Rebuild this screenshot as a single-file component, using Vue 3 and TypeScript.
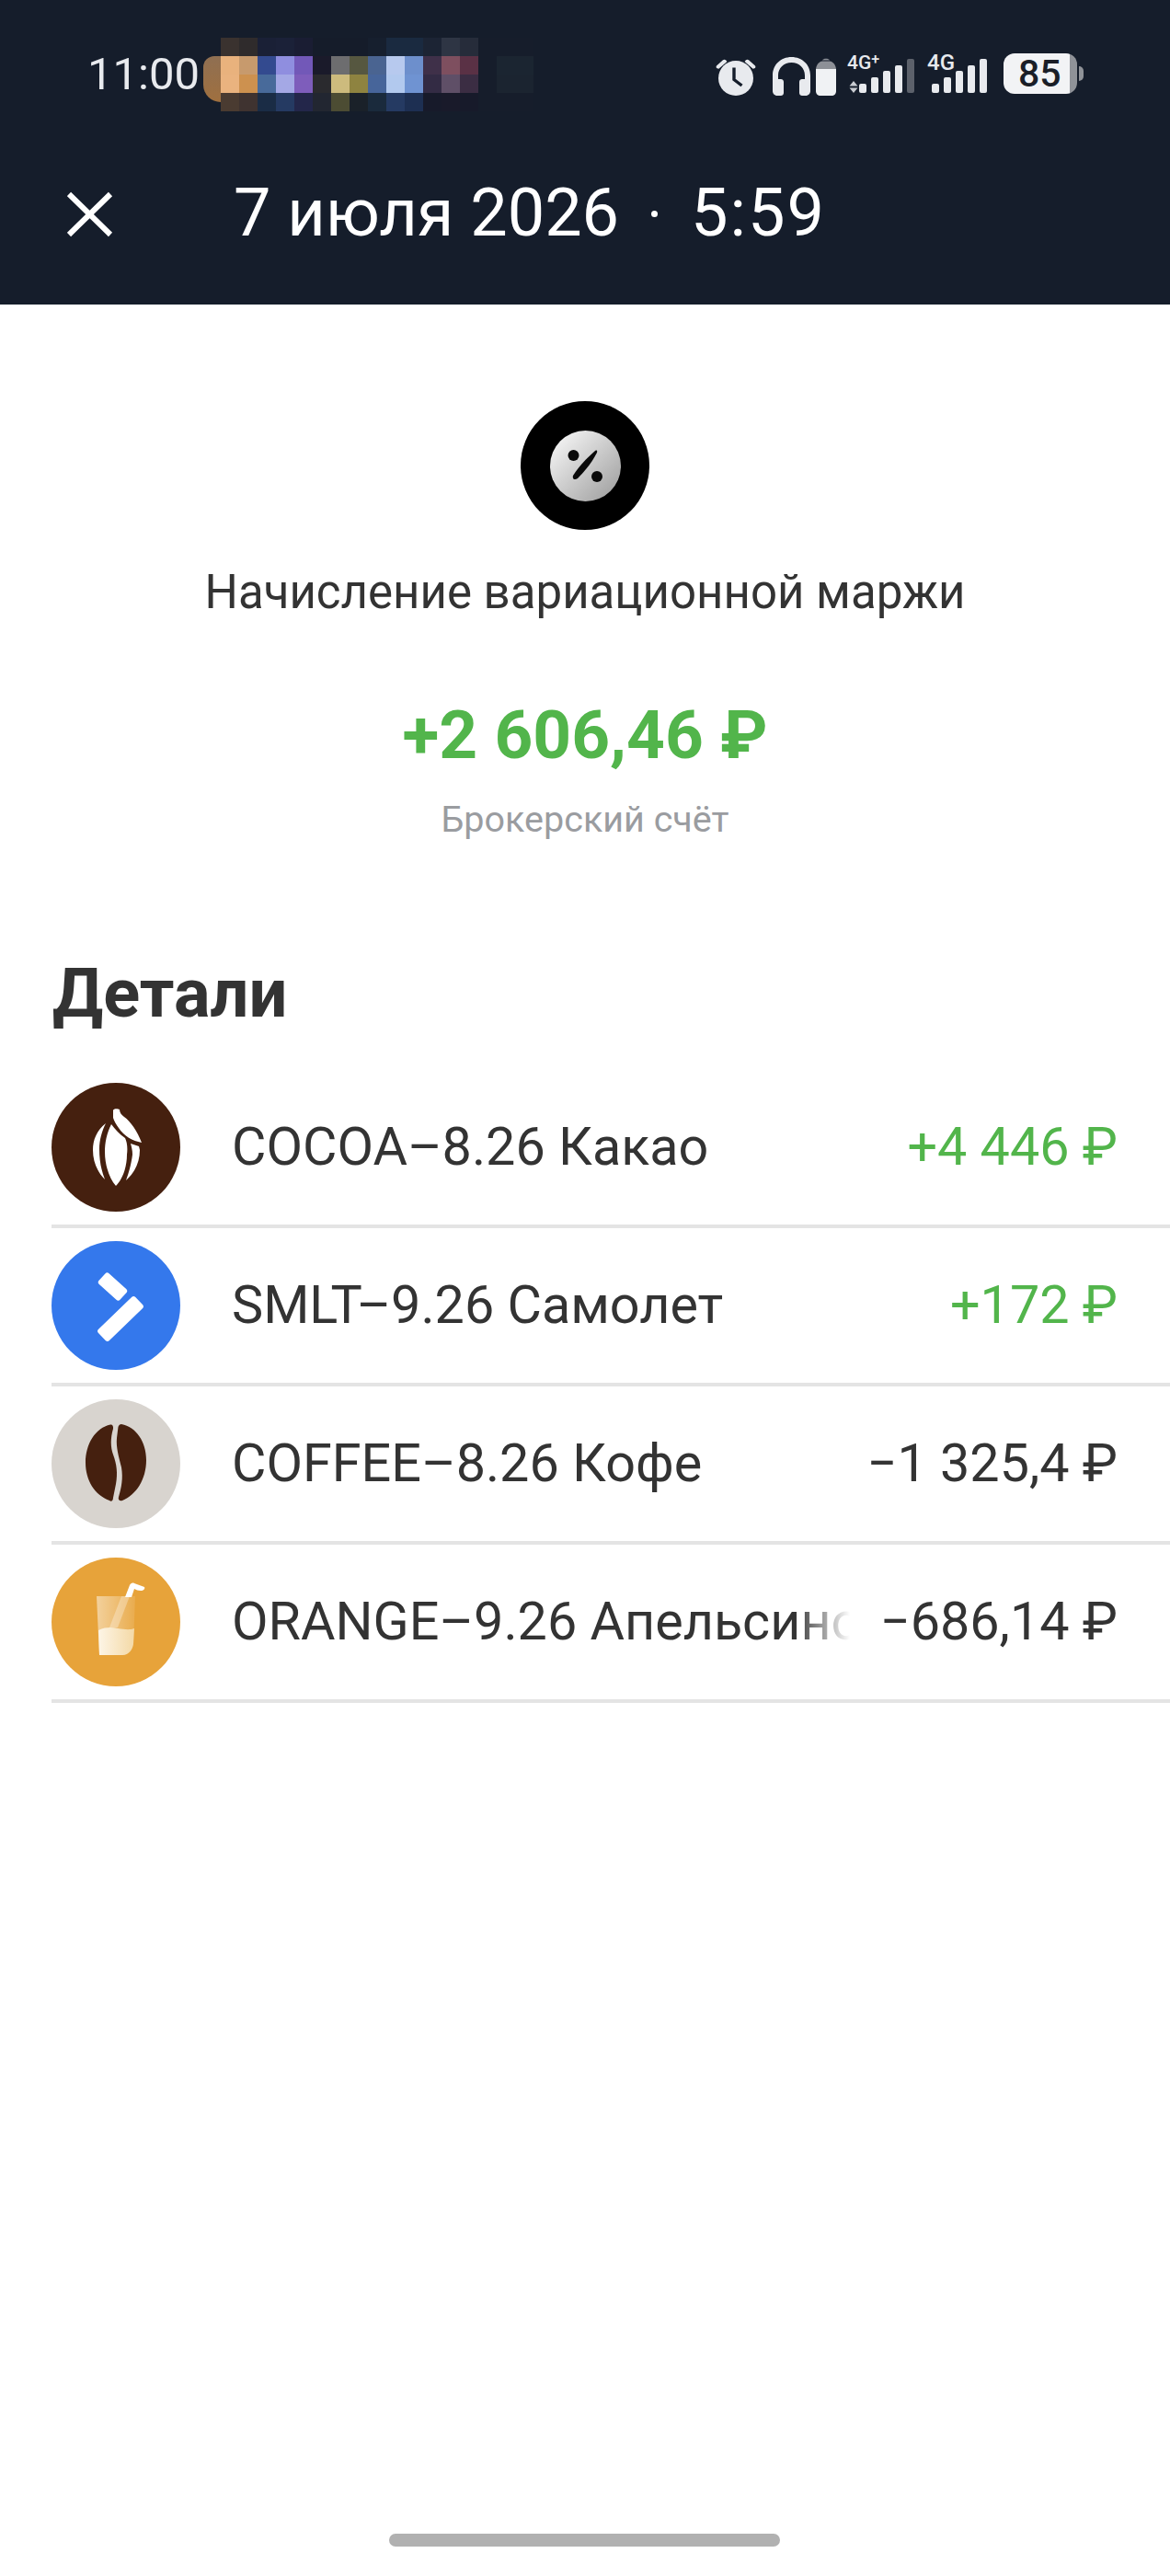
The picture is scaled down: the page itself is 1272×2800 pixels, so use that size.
<template>
  <div class="page">
    <header class="top">
      <div class="status">
        <span class="clock">11:00</span>
        <div class="mosaic">
          <i
            v-for="(c, i) in mosaic"
            :key="i"
            :style="{ background: c }"
          />
        </div>
        <div class="status-icons">
          <!-- будильник -->
          <svg class="ic" width="44" height="42" viewBox="0 0 44 42">
            <path d="M1 9.500 8 3.200c1-.9 2.600-.7 3.300.4L12.400 5 3.400 12.800 1.600 12.200C.5 11.800.3 10.300 1 9.500zM43 9.500 36 3.200c-1-.9-2.600-.7-3.300.4L31.600 5l9 7.800 1.800-.6c1.100-.4 1.300-1.900.6-2.700z" fill="#e8eaee" />
            <circle cx="22" cy="23" r="19" fill="#e8eaee" />
            <path d="M20 11.500V24.500L28.500 31" fill="none" stroke="#151d2b" stroke-width="3.400" />
          </svg>
          <!-- наушники -->
          <svg class="ic ic-hp" width="41" height="42" viewBox="0 0 41 42">
            <path d="M0 25V20C0 8.500 8.800 0 20.500 0S41 8.500 41 20v5h-6v-5C35 12 28.800 6 20.500 6S6 12 6 20v5z" fill="#e8eaee" />
            <path d="M0 24h9c1.500 0 3 1 3 3v12c0 2-1.500 3-3 3H5c-3 0-5-2.500-5-5zM41 24h-9c-1.500 0-3 1-3 3v12c0 2 1.500 3 3 3h4c3 0 5-2.500 5-5z" fill="#e8eaee" />
          </svg>
          <svg class="ic ic-bud" width="22" height="42" viewBox="0 0 22 42">
            <path d="M7 3.500C8 1 14 1 15 3.500z" fill="#8d9097" />
            <path d="M0 14c0-5 3-9 7-9.500h8c4 .5 7 4.500 7 9.500z" fill="#8d9097" />
            <path d="M0 13h22v24c0 3-2 5-5 5H5c-3 0-5-2-5-5z" fill="#f0f2f4" />
          </svg>
          <!-- сигнал 4G+ -->
          <div class="sim sim-a">
            <span class="net">4G<sup>+</sup></span>
            <svg class="arrows" width="10" height="13" viewBox="0 0 10 13">
              <path d="M5 0 9.500 5.500H.5zM5 13 .5 7.500h9z" fill="#c8cbd1" />
            </svg>
            <div class="bars">
              <b v-for="h in [10, 17, 24, 30, 37]" :key="h" :class="{ off: h === 37 }" :style="{ height: h + 'px' }" />
            </div>
          </div>
          <div class="sim sim-b">
            <span class="net">4G</span>
            <div class="bars">
              <b v-for="h in [10, 17, 24, 30, 37]" :key="h" :style="{ height: h + 'px' }" />
            </div>
          </div>
          <div class="batt">
            <div class="batt-body"><span>85</span></div>
            <i class="batt-cap" />
          </div>
        </div>
      </div>
      <div class="nav">
        <svg class="close" width="50" height="50" viewBox="0 0 50 50">
          <path d="M2 3 47 47M47 3 2 47" fill="none" stroke="#fff" stroke-width="6" />
        </svg>
        <div class="title">
          <span class="title-date">7 июля 2026</span>
          <i class="title-dot" />
          <span class="title-time">5:59</span>
        </div>
      </div>
    </header>

    <section class="summary">
      <div class="badge">
        <svg width="77" height="77" viewBox="0 0 77 77">
          <defs>
            <linearGradient id="coin" x1="0.1" y1="0.1" x2="0.9" y2="0.9">
              <stop offset="0" stop-color="#f3f3f3" />
              <stop offset="1" stop-color="#a4a4a4" />
            </linearGradient>
          </defs>
          <circle cx="38.500" cy="38.500" r="38.500" fill="url(#coin)" />
          <circle cx="25.500" cy="27" r="6" fill="#0a0a0a" />
          <circle cx="51" cy="50" r="6" fill="#0a0a0a" />
          <path d="M49 22C51 21 51.500 22 51 24 46 34 38 44 30 52 27 54 24 53 25 49 31 39 40 30 49 22z" fill="#0a0a0a" />
        </svg>
      </div>
      <div class="op-name">Начисление вариационной маржи</div>
      <div class="op-sum">+2 606,46 ₽</div>
      <div class="op-acc">Брокерский счёт</div>
    </section>

    <h2 class="details">Детали</h2>
    <ul class="rows">
      <li v-for="row in rows" :key="row.name" class="row">
        <div class="logo" :style="{ background: row.bg }">
          <svg v-if="row.icon === 'cocoa'" width="140" height="140" viewBox="0 0 140 140">
            <path d="M59 44C49 52 45 62 45 73 45 86 50 97 58 105 54 95 52 84 52 72 52 62 55 52 59 44z" fill="#fff" />
            <path d="M65 45C60 55 58 65 58 75 58 90 63 104 70 112 77 105 82 92 82 78 83 70 82 64 80 60 74 56 69 50 65 45z" fill="#fff" />
            <path d="M67 30C67 28 72 28 74 29 74 32 76 35 79 37 86 42 93 52 98 65 88 63 79 58 73 49 70 45 68 41 67 38z" fill="#fff" />
            <path d="M86 66C89 67 92 68 95 69L96 73C96 87 90 98 81 106 85 95 87 86 88 78 88 73 87 70 86 66z" fill="#fff" />
          </svg>
          <svg v-else-if="row.icon === 'smlt'" width="140" height="140" viewBox="0 0 140 140">
            <rect x="-15.500" y="-8" width="31" height="16" rx="3" transform="translate(66.500 49.500) rotate(42)" fill="#fff" />
            <rect x="-28" y="-8.500" width="56" height="17" rx="3" transform="translate(75 84.500) rotate(-44)" fill="#fff" />
          </svg>
          <svg v-else-if="row.icon === 'coffee'" width="140" height="140" viewBox="0 0 140 140">
            <path d="M64 27.500C66 27 67.500 29 67 32 64 42 64 52 67 60 71 71 72 80 70 92L67 107C67 110 65 112 63 110 47 104 37 88 37 69 37 48 48 31 64 27.500z" fill="#45200f" />
            <path d="M76 27C92 30 103 46 103 66 103 87 92 104 77 110 74 111 72 109 73 106 76 96 78 86 76 74 73 62 70 52 71 42L72.500 30C73 28 74.500 27 76 27z" fill="#45200f" />
          </svg>
          <svg v-else width="140" height="140" viewBox="0 0 140 140">
            <defs>
              <linearGradient id="glass" x1="0" x2="1" y1="0" y2="0">
                <stop offset="0" stop-color="#fff" stop-opacity=".5" />
                <stop offset="1" stop-color="#fff" stop-opacity=".1" />
              </linearGradient>
              <linearGradient id="juice" x1="0" x2="1" y1="0" y2="0">
                <stop offset="0" stop-color="#fdf5e6" />
                <stop offset="1" stop-color="#f4d9a6" />
              </linearGradient>
            </defs>
            <path d="M49 42H91L89 94C88 100 84 106 77 106H52z" fill="url(#glass)" />
            <path d="M51 79C60 75 66 76 72 77 79 78 85 79 90 77L89 94C88 100 84 106 77 106H52z" fill="url(#juice)" />
            <path d="M63 76 76 42 85 42 72 76z" fill="#fff" opacity=".3" />
            <path d="M80 43 85 30C86 28 88 27 90 28L101 32C102 34 100 36 97 36 94 36 92 35 90 34L87 43z" fill="#fff" />
          </svg>
        </div>
        <div class="row-body">
          <span class="row-name">{{ row.name }}</span>
          <span class="row-sum" :class="{ plus: row.sum.startsWith('+') }">{{ row.sum }}</span>
        </div>
      </li>
    </ul>
    <div class="home-bar" />
  </div>
</template>

<script setup lang="ts">
interface Row {
  icon: string
  bg: string
  name: string
  sum: string
}

const rows: Row[] = [
  { icon: 'cocoa', bg: '#45200f', name: 'COCOA–8.26 Какао', sum: '+4 446 ₽' },
  { icon: 'smlt', bg: '#3478ec', name: 'SMLT–9.26 Самолет', sum: '+172 ₽' },
  { icon: 'coffee', bg: '#d8d4cf', name: 'COFFEE–8.26 Кофе', sum: '−1 325,4 ₽' },
  { icon: 'orange', bg: '#e7a33a', name: 'ORANGE–9.26 Апельсиновый сок', sum: '−686,14 ₽' },
]

// размытая полоса уведомлений, 17 колонок на 4 ряда
const mosaic: string[] = [
  '#3a322f', '#2f2b2c', '#1a2036', '#1b2138', '#1a1d33', '#151c2a', '#151c2a', '#151c2a', '#161f2e', '#1a2a40', '#1a2a40', '#1c2434', '#2e3544', '#262c3a', '#161d2b', '#161d2b', '#161d2b',
  '#e9b27d', '#c79a6d', '#334a8f', '#8f8edf', '#7258b8', '#1a1a2a', '#6d6d6f', '#565740', '#4a6491', '#b7c9ee', '#6d8fcc', '#3f3049', '#7e4f5f', '#5a3145', '#161d2b', '#1b2531', '#1b2531',
  '#eab37f', '#cd914f', '#486a9a', '#a4a8e5', '#7e5dbb', '#2a2a2e', '#cdbb7d', '#8e8340', '#47659a', '#b2c9ee', '#6f93d2', '#332b44', '#5f4f67', '#3b2d43', '#161d2b', '#1b2430', '#1b2430',
  '#4a3b31', '#3f3330', '#1a2c45', '#253a62', '#23264a', '#222631', '#4c4c33', '#1a2129', '#1a2a3c', '#253a62', '#1d2f52', '#171a2a', '#191a2a', '#171a2a', '#161d2b', '#161d2b', '#161d2b',
]
</script>

<style scoped>
.page {
  position: relative;
  height: 2800px;
  font-family: Roboto, "Noto Sans", sans-serif;
  color: #333;
  overflow: hidden;
}

.top {
  height: 331px;
  background: #151d2b;
  box-sizing: border-box;
}

.status {
  display: flex;
  align-items: center;
  height: 40px;
  padding: 61px 0 0 95px;
}

.clock {
  font-size: 49px;
  line-height: 42px;
  color: #e8eaee;
  width: 145px;
  flex: none;
}

.mosaic {
  position: relative;
  display: grid;
  grid-template-columns: repeat(17, 20px);
  grid-auto-rows: 20px;
  flex: none;
}

/* край аватарки слева от мозаики */
.mosaic::before {
  content: "";
  position: absolute;
  left: -19px;
  top: 20px;
  width: 19px;
  height: 50px;
  border-radius: 14px 0 0 22px;
  background: linear-gradient(180deg, #8f6f52, #a0703f);
}

.mosaic i {
  display: block;
}

.status-icons {
  display: flex;
  align-items: flex-end;
  position: absolute;
  top: 60px;
  left: 778px;
  height: 44px;
}

.ic {
  flex: none;
  display: block;
}

.ic-hp {
  margin-left: 18px;
}

.ic-bud {
  margin-left: 6px;
}

.sim {
  position: relative;
  height: 44px;
  flex: none;
}

.sim-a {
  width: 73px;
  margin-left: 12px;
}

.sim-b {
  width: 65px;
  margin-left: 14px;
}

.net {
  position: absolute;
  left: 0;
  top: -3px;
  font-size: 21px;
  line-height: 22px;
  font-weight: 500;
  color: #e8eaee;
}

.net sup {
  font-size: 16px;
  line-height: 0;
  vertical-align: 5px;
}

.sim-b .net {
  font-size: 24px;
}

.arrows {
  position: absolute;
  left: 2px;
  bottom: 3px;
}

.bars {
  position: absolute;
  right: 0;
  bottom: 3px;
  display: flex;
  align-items: flex-end;
  gap: 5px;
}

.bars b {
  display: block;
  width: 8px;
  border-radius: 2px;
  background: #e8eaee;
}

.bars b.off {
  background: #5c616b;
}

.batt {
  display: flex;
  align-items: center;
  margin-left: 18px;
  margin-bottom: 2px;
  flex: none;
}

.batt-body {
  width: 80px;
  height: 44px;
  border-radius: 12px;
  background: linear-gradient(90deg, #f2f3f5 0 90%, #8f9298 90%);
  display: flex;
  align-items: center;
  padding-left: 16px;
  box-sizing: border-box;
}

.batt-body span {
  font-size: 41px;
  line-height: 44px;
  font-weight: 500;
  color: #1a1e27;
}

.batt-cap {
  display: block;
  width: 5px;
  height: 16px;
  margin-left: 2px;
  border-radius: 0 8px 8px 0;
  background: #8f9298;
}

.nav {
  display: flex;
  align-items: center;
  margin-top: 106px;
  padding-left: 73px;
}

.close {
  flex: none;
  display: block;
}

.title {
  display: flex;
  align-items: center;
  margin-left: 131px;
  margin-top: -2px;
  font-size: 72px;
  line-height: 54px;
  color: #fff;
  white-space: nowrap;
}

.title-dot {
  display: block;
  width: 7px;
  height: 7px;
  margin: 0 36px 0 35px;
  border-radius: 50%;
  background: #fff;
}

.title-time {
  letter-spacing: 2px;
}

.summary {
  display: flex;
  flex-direction: column;
  align-items: center;
  padding-top: 105px;
}

.badge {
  width: 140px;
  height: 140px;
  border-radius: 50%;
  background: #000;
  display: flex;
  align-items: center;
  justify-content: center;
}

.badge svg {
  display: block;
}

.op-name {
  margin-top: 40px;
  font-size: 51px;
  line-height: 56px;
  color: #333;
}

.op-sum {
  margin-top: 87px;
  font-size: 73px;
  line-height: 80px;
  font-weight: 700;
  color: #52b54b;
}

.op-acc {
  margin-top: 29px;
  font-size: 39.500px;
  line-height: 46px;
  color: #9a9ca0;
}

.details {
  margin: 126px 0 0 57px;
  font-size: 74px;
  line-height: 80px;
  font-weight: 700;
  color: #333;
}

.rows {
  list-style: none;
  margin: 43px 0 0 56px;
  padding: 0;
}

.row {
  display: flex;
  align-items: center;
  gap: 56px;
  height: 172px;
  box-sizing: border-box;
  border-bottom: 4px solid #e4e4e4;
}

.logo {
  width: 140px;
  height: 140px;
  border-radius: 50%;
  flex: none;
}

.logo svg {
  display: block;
}

.row-body {
  display: flex;
  flex: 1;
  min-width: 0;
  align-items: center;
  gap: 33px;
  padding-right: 57px;
}

.row-name {
  flex: 1;
  min-width: 0;
  font-size: 57.500px;
  line-height: 68px;
  white-space: nowrap;
  overflow: hidden;
  -webkit-mask-image: linear-gradient(90deg, #000 calc(100% - 60px), transparent);
  mask-image: linear-gradient(90deg, #000 calc(100% - 60px), transparent);
}

.row-sum {
  flex: none;
  font-size: 57.500px;
  line-height: 68px;
  white-space: nowrap;
}

.row-sum.plus {
  color: #52b54b;
}

.home-bar {
  position: absolute;
  left: 423px;
  top: 2754px;
  width: 425px;
  height: 14px;
  border-radius: 7px;
  background: #b1b1b1;
}
</style>
